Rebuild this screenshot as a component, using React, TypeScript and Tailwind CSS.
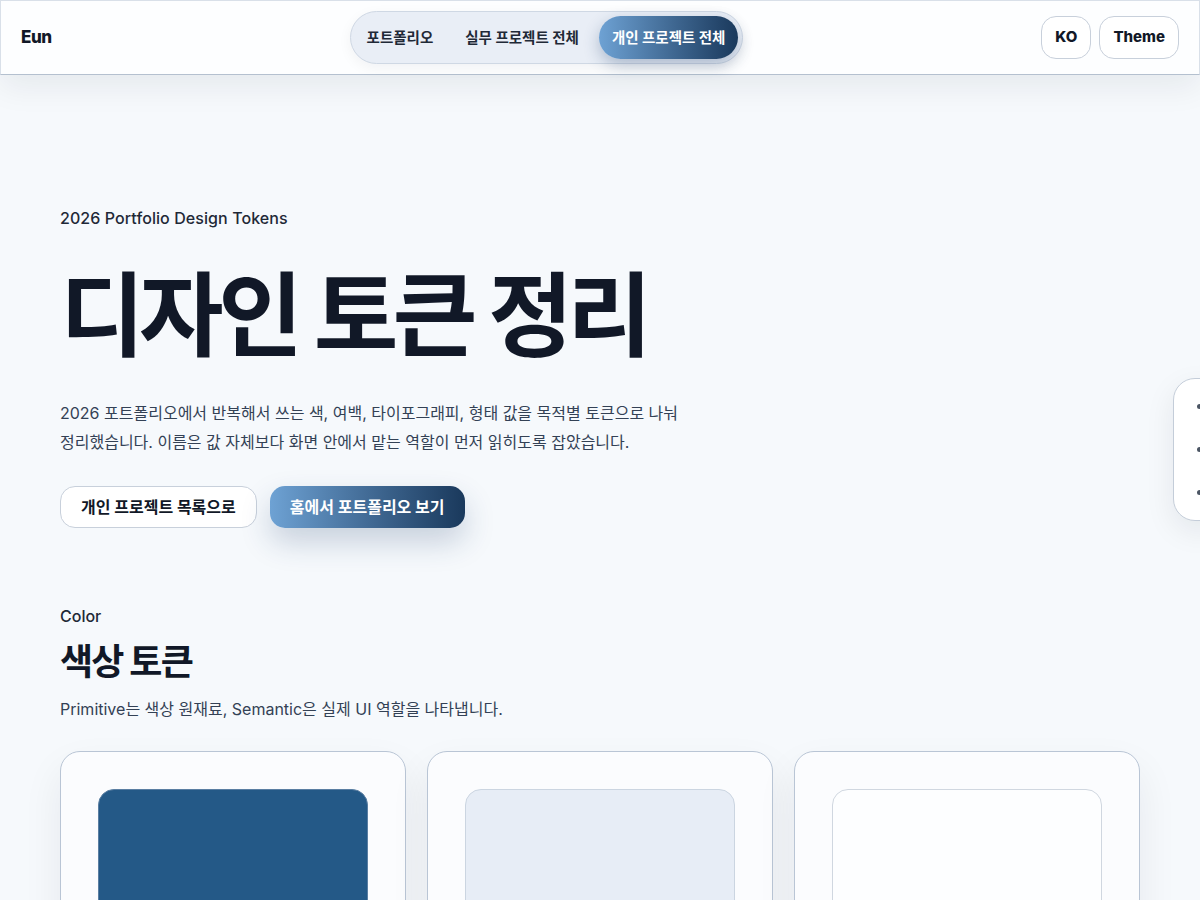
import React from "react";

const font = { fontFamily: 'Inter, "Noto Sans CJK KR", sans-serif' };

const navItems = ["포트폴리오", "실무 프로젝트 전체", "개인 프로젝트 전체"];

const swatches = [
  { name: "blue-700", value: "#245987", cls: "bg-[#245987] border-[#5a7ea2]" },
  { name: "slate-100", value: "#E7EDF6", cls: "bg-[#e7edf6] border-[#cbd5e1]" },
  { name: "white", value: "#FDFEFF", cls: "bg-[#fdfeff] border-[#d0d7e0]" },
];

const Header = () => (
  <header className="sticky top-0 z-20 flex h-[75px] items-center justify-between border border-[#d9e0e9] border-b-[#b4c0cf] bg-[#fdfeff] px-5 shadow-[0_12px_32px_rgba(15,23,42,0.07)]">
    <span className="text-[17px] font-extrabold tracking-tight text-[#111827]">Eun</span>
    <nav className="flex items-center gap-2 rounded-full border border-[#cfd8e4] bg-[#e9eef6] p-1 shadow-[0_4px_14px_rgba(15,23,42,0.05)]">
      {navItems.map((item, i) =>
        i === 2 ? (
          <a
            key={item}
            className="rounded-full bg-gradient-to-r from-[#6ea2d4] to-[#1a395c] px-[13px] py-[11px] text-[14.5px] leading-[21px] font-bold text-white shadow-[0_6px_16px_rgba(30,64,110,0.3)]"
          >
            {item}
          </a>
        ) : (
          <a key={item} className="px-[12px] py-[11px] text-[14.5px] leading-[21px] font-bold text-[#1f2937]">
            {item}
          </a>
        )
      )}
    </nav>
    <div className="flex items-center gap-2">
      <button className="h-[43px] rounded-[15px] border border-[#c8d0db] bg-white px-[13px] text-[15px] font-extrabold text-[#111827]">
        KO
      </button>
      <button className="h-[43px] rounded-[15px] border border-[#c8d0db] bg-white px-[13px] text-[15px] font-extrabold text-[#111827]">
        Theme
      </button>
    </div>
  </header>
);

const SideDots = () => (
  <div className="fixed right-[-30px] top-[378px] z-10 flex h-[143px] w-[57px] flex-col items-start justify-between rounded-[22px] border border-[#c4cdd9] bg-white py-[25px] pl-[23px] shadow-[0_10px_30px_rgba(15,23,42,0.08)]">
    <span className="h-[5px] w-[5px] rounded-full bg-[#4b5563]" />
    <span className="h-[5px] w-[5px] rounded-full bg-[#4b5563]" />
    <span className="h-[5px] w-[5px] rounded-full bg-[#4b5563]" />
  </div>
);

export default function App() {
  return (
    <div className="min-h-screen bg-[#f6f9fc] text-[#111827]" style={font}>
      <Header />
      <SideDots />

      <main className="mx-auto max-w-[1080px] pt-[131px] pb-24">
        {/* Hero */}
        <section>
          <p className="text-[16px] leading-6 font-medium tracking-[0.005em] text-[#1f2937]">2026 Portfolio Design Tokens</p>
          <h1 className="mt-[36px] text-[92px] leading-[100px] font-bold tracking-[-0.06em] text-[#111827]">
            디자인 토큰 정리
          </h1>
          <p className="mt-[33px] max-w-[640px] break-keep text-[16px] leading-[29px] text-[#334155]">
            2026 포트폴리오에서 반복해서 쓰는 색, 여백, 타이포그래피, 형태 값을 목적별 토큰으로 나눠
            정리했습니다. 이름은 값 자체보다 화면 안에서 맡는 역할이 먼저 읽히도록 잡았습니다.
          </p>
          <div className="mt-[29px] flex gap-[13px]">
            <a className="flex h-[42px] items-center rounded-[15px] border border-[#c8d0db] bg-white px-5 text-[16px] font-bold text-[#111827]">
              개인 프로젝트 목록으로
            </a>
            <a className="flex h-[42px] items-center rounded-[15px] bg-gradient-to-r from-[#6ea2d4] to-[#1a395c] px-5 text-[16px] font-bold text-white shadow-[0_14px_30px_rgba(30,64,110,0.22)]">
              홈에서 포트폴리오 보기
            </a>
          </div>
        </section>

        {/* Color tokens */}
        <section className="mt-[76px]">
          <p className="text-[16px] leading-6 font-medium text-[#1f2937]">Color</p>
          <h2 className="mt-[12px] text-[36px] leading-[44px] font-bold tracking-[-0.05em] text-[#111827]">색상 토큰</h2>
          <p className="mt-[13px] text-[16px] leading-6 text-[#334155]">
            Primitive는 색상 원재료, Semantic은 실제 UI 역할을 나타냅니다.
          </p>

          <div className="mt-[30px] grid grid-cols-3 gap-[21px]">
            {swatches.map((s) => (
              <div
                key={s.name}
                className="rounded-[20px] border border-[#b9c5d5] bg-[#fbfcfe] px-[37px] pt-[37px] pb-8 shadow-[0_18px_40px_rgba(15,23,42,0.07)]"
              >
                <div className={`h-[140px] rounded-[16px] border ${s.cls}`} />
                <p className="mt-5 text-[15px] font-bold text-[#111827]">{s.name}</p>
                <p className="mt-1 text-[14px] text-[#475569]">{s.value}</p>
              </div>
            ))}
          </div>
        </section>
      </main>
    </div>
  );
}
